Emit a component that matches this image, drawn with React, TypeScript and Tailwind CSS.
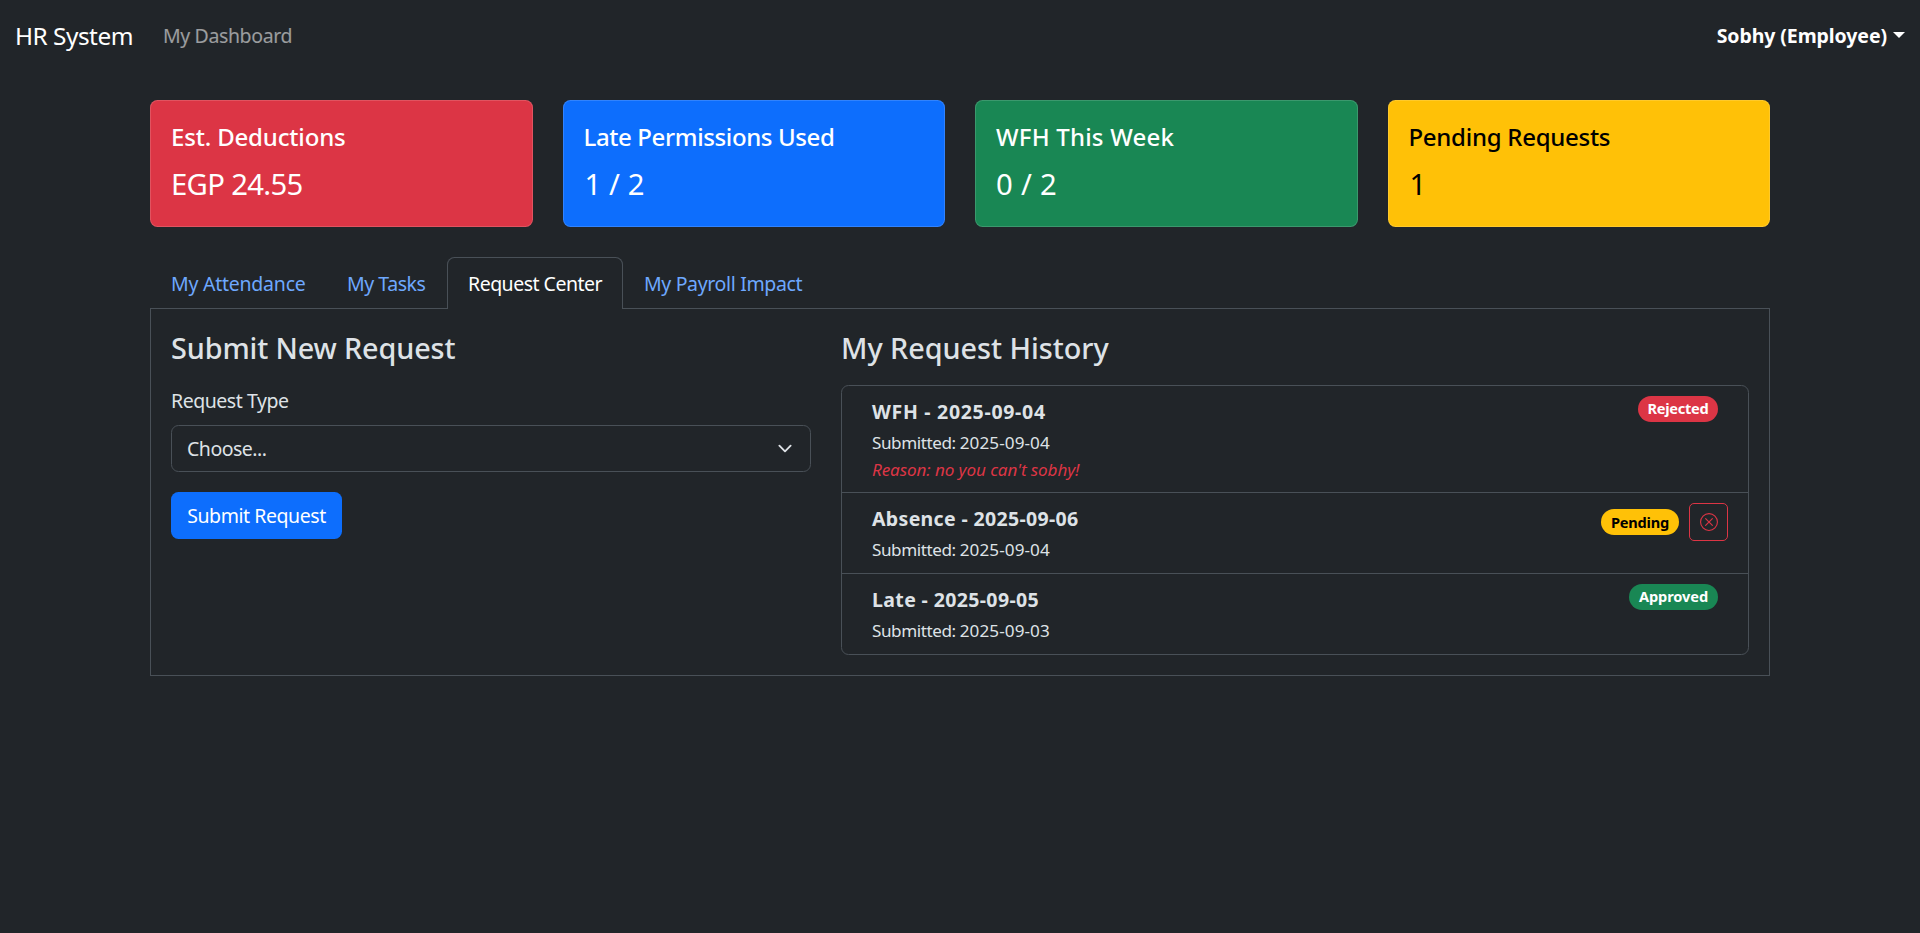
import { clsx } from "clsx";
import { BsXCircle } from "react-icons/bs";

type Stat = { title: string; titleClass: string; value: string; valueClass: string; card: string };

const stats: Stat[] = [
  { title: "Est. Deductions", titleClass: "tracking-[-0.17px]", value: "EGP 24.55", valueClass: "tracking-[-0.67px]", card: "bg-[#dc3545] text-white" },
  { title: "Late Permissions Used", titleClass: "tracking-[-0.38px]", value: "1 / 2", valueClass: "pl-px tracking-[0.1px]", card: "bg-[#0d6efd] text-white" },
  { title: "WFH This Week", titleClass: "tracking-[0.2px]", value: "0 / 2", valueClass: "tracking-[0.3px]", card: "bg-[#198754] text-white" },
  { title: "Pending Requests", titleClass: "tracking-[-0.28px]", value: "1", valueClass: "pl-px", card: "bg-[#ffc107] text-black" },
];

const tabs = [
  { label: "My Attendance", active: false, className: "w-[176px] tracking-[-0.24px]" },
  { label: "My Tasks", active: false, className: "w-[121px] tracking-[-0.45px]" },
  { label: "Request Center", active: true, className: "w-[176px] tracking-[-0.5px]" },
  { label: "My Payroll Impact", active: false, className: "w-[201px] tracking-[-0.35px]" },
];

function StatCard({ title, titleClass, value, valueClass, card }: Stat) {
  return (
    <div className={clsx("h-[127px] flex-1 rounded-[7.5px] border border-white/15 px-5 pt-[21px]", card)}>
      <h5 className={clsx("mb-2.5 text-[24px] font-medium leading-[30px]", titleClass)}>{title}</h5>
      <p className={clsx("text-[29.25px] leading-[45px]", valueClass)}>{value}</p>
    </div>
  );
}

function Badge({ label, className }: { label: string; className: string }) {
  return (
    <span className={clsx("flex h-[25.5px] items-center justify-center rounded-full text-[14.6px] font-bold leading-none", className)}>
      {label}
    </span>
  );
}

function Navbar() {
  return (
    <nav className="flex h-[70px] items-center justify-between px-[15px]">
      <div className="flex items-center">
        <a className="w-[148px] pt-0.5 text-[24.4px] leading-[38px] tracking-[-0.5px] text-white">HR System</a>
        <a className="pt-px text-[19.5px] leading-[30px] tracking-[-0.38px] text-white/55">My Dashboard</a>
      </div>
      <a className="flex items-center gap-1.5 text-[19.5px] font-bold leading-[30px] tracking-[-0.08px] text-white">
        <span className="pt-px">Sobhy (Employee)</span>
        <svg className="h-[6px] w-[12px]" viewBox="0 0 12 6" fill="currentColor">
          <path d="M0 0h12L6 6z" />
        </svg>
      </a>
    </nav>
  );
}

function RequestForm() {
  return (
    <section className="w-[640px]">
      <h4 className="mb-[19px] pt-px text-[28.8px] font-medium leading-9 tracking-[-0.12px]">Submit New Request</h4>
      <div className="mb-[9px] pt-px text-[19.5px] leading-[30px] tracking-[-0.46px]">Request Type</div>
      <div className="mb-5 flex h-[47px] items-center justify-between rounded-[7.5px] border border-[#495057] px-[15px]">
        <span className="text-[19.5px] leading-[30px] tracking-[-0.5px]">Choose...</span>
        <svg className="h-[15px] w-5" viewBox="0 0 16 16" fill="none" stroke="#dee2e6" strokeLinecap="round" strokeLinejoin="round" strokeWidth="2">
          <path d="m2 5 6 6 6-6" />
        </svg>
      </div>
      <button className="h-[47px] w-[171px] rounded-[7.5px] bg-[#0d6efd] text-[19.5px] leading-[30px] tracking-[-0.43px] text-white">
        Submit Request
      </button>
    </section>
  );
}

function Submitted({ date }: { date: string }) {
  return (
    <div className="pt-px text-[17.1px] leading-[30px]">
      <span className="tracking-[-0.42px]">Submitted: </span>
      <span className="tracking-[0.08px]">{date}</span>
    </div>
  );
}

function RequestHistory() {
  const row = "flex items-start justify-between py-2.5 pl-[30px]";
  const title = "pt-px text-[19.5px] font-bold leading-[30px]";
  return (
    <section className="w-[908px]">
      <h4 className="mb-[19px] pt-px text-[28.8px] font-medium leading-9 tracking-[-0.03px]">My Request History</h4>
      <ul className="divide-y divide-[#495057] rounded-[7.5px] border border-[#495057]">
        <li className={clsx(row, "h-[107px] pr-[30px]")}>
          <div>
            <div className={clsx(title, "tracking-[0.7px]")}>WFH - 2025-09-04</div>
            <Submitted date="2025-09-04" />
            <div className="text-[17.1px] italic leading-[23px] tracking-[-0.1px] text-[#dc3545]">Reason: no you can't sobhy!</div>
          </div>
          <Badge label="Rejected" className="w-[80px] bg-[#dc3545] tracking-[-0.28px] text-white" />
        </li>
        <li className={clsx(row, "h-[81px] pr-5")}>
          <div>
            <div className={clsx(title, "tracking-[0.34px]")}>Absence - 2025-09-06</div>
            <Submitted date="2025-09-04" />
          </div>
          <div className="flex items-center gap-2.5">
            <Badge label="Pending" className="w-[78px] bg-[#ffc107] tracking-[-0.23px] text-black" />
            <button className="flex h-[38px] w-[39px] items-center justify-center rounded-[5px] border border-[#dc3545] text-[#dc3545]">
              <BsXCircle className="size-[18px]" />
            </button>
          </div>
        </li>
        <li className={clsx(row, "h-20 pr-[30px]")}>
          <div>
            <div className={clsx(title, "tracking-[0.37px]")}>Late - 2025-09-05</div>
            <Submitted date="2025-09-03" />
          </div>
          <Badge label="Approved" className="w-[89px] bg-[#198754] tracking-[-0.1px] text-white" />
        </li>
      </ul>
    </section>
  );
}

export default function App() {
  return (
    <div className="min-h-screen bg-[#212529] font-['Noto_Sans',sans-serif] text-[#dee2e6]">
      <Navbar />
      <main className="mx-auto mt-[30px] w-[1620px]">
        <div className="mb-[30px] flex gap-[30px]">
          {stats.map((s) => (
            <StatCard key={s.title} {...s} />
          ))}
        </div>
        <div className="flex">
          {tabs.map((t) => (
            <a
              key={t.label}
              className={clsx(
                "h-[52px] whitespace-nowrap text-[19.5px] leading-[30px]",
                t.active
                  ? "rounded-t-[7.5px] border-x border-t border-[#495057] px-5 pt-[11px] text-white"
                  : "border-b border-[#495057] px-[21px] pt-3 text-[#6ea8fe]",
                t.className,
              )}
            >
              {t.label}
            </a>
          ))}
          <div className="flex-1 border-b border-[#495057]" />
        </div>
        <div className="flex gap-[30px] border-x border-b border-[#495057] p-5">
          <RequestForm />
          <RequestHistory />
        </div>
      </main>
    </div>
  );
}
